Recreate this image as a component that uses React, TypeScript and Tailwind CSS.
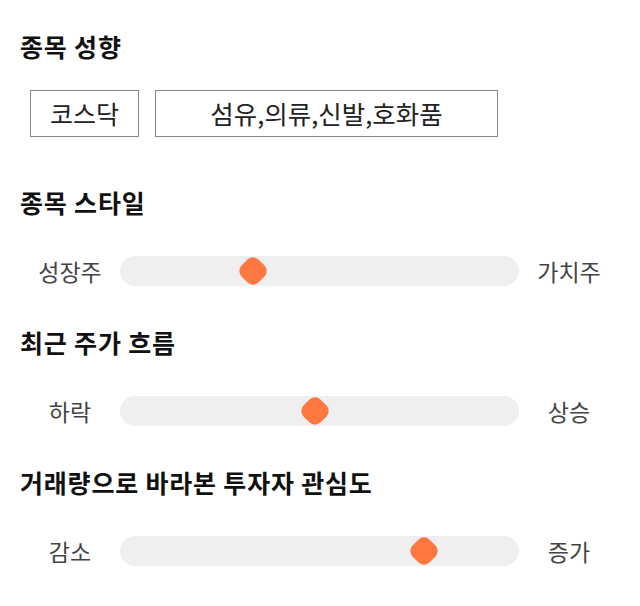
import React from "react";

const font = { fontFamily: '"Noto Sans CJK KR", "Noto Sans", sans-serif' };

function Heading({ children }: { children: React.ReactNode }) {
  return (
    <h2 className="pl-[20px] text-[25px] leading-[28px] font-bold tracking-[0.8px] text-[#111]">{children}</h2>
  );
}

function Slider({ left, right, pos }: { left: string; right: string; pos: number }) {
  return (
    <div className="flex items-center pl-[30px]">
      <div className="w-[80px] text-center text-[23px] leading-[30px] text-[#444]">{left}</div>
      <div className="relative ml-[10px] h-[30px] w-[399px] rounded-full bg-[#efefef]">
        <div
          className="absolute top-1/2 h-[24px] w-[24px] -translate-x-1/2 -translate-y-1/2 rotate-45 rounded-[8px] bg-[#ff7741]"
          style={{ left: `${pos}px` }}
        />
      </div>
      <div className="ml-[10px] w-[80px] text-center text-[23px] leading-[30px] text-[#444]">{right}</div>
    </div>
  );
}

export default function App() {
  return (
    <div className="h-[606px] w-[640px] bg-white pt-[32px]" style={font}>
      <Heading>종목 성향</Heading>
      <div className="mt-[30px] flex gap-[16px] pl-[30px]">
        <div className="flex h-[47px] w-[109px] items-center justify-center border border-[#888] text-[25px] text-[#222]">
          코스닥
        </div>
        <div className="flex h-[47px] w-[343px] items-center justify-center border border-[#888] text-[25.5px] text-[#222]">
          섬유,의류,신발,호화품
        </div>
      </div>
      <div className="mt-[51px]">
        <Heading>종목 스타일</Heading>
      </div>
      <div className="mt-[40px]">
        <Slider left="성장주" right="가치주" pos={133} />
      </div>
      <div className="mt-[42px]">
        <Heading>최근 주가 흐름</Heading>
      </div>
      <div className="mt-[40px]">
        <Slider left="하락" right="상승" pos={195} />
      </div>
      <div className="mt-[42px]">
        <Heading>거래량으로 바라본 투자자 관심도</Heading>
      </div>
      <div className="mt-[40px]">
        <Slider left="감소" right="증가" pos={304} />
      </div>
    </div>
  );
}
